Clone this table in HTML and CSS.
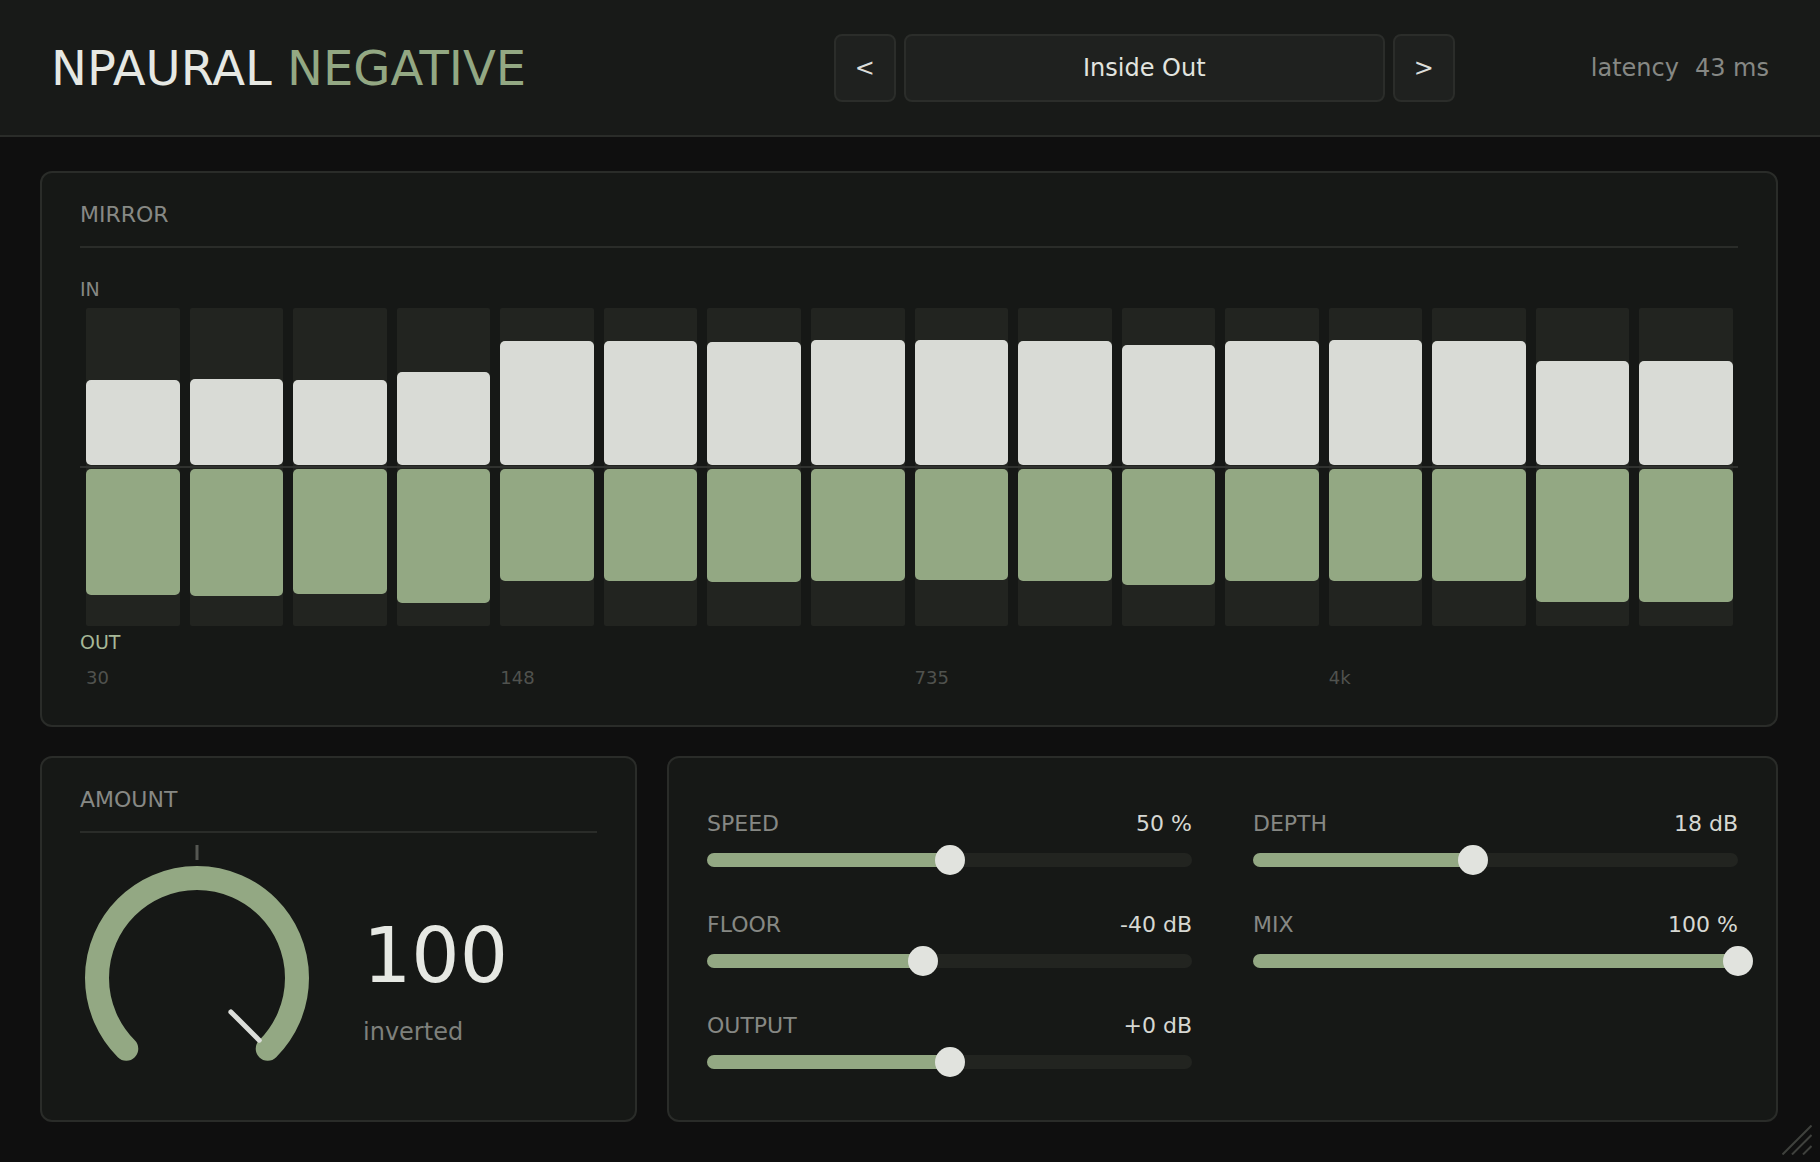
FILE: index.html
```html
<!DOCTYPE html>
<html lang="en">
<head>
<meta charset="utf-8">
<title>NPAURAL NEGATIVE</title>
<link rel="stylesheet" href="styles.css">
</head>
<body>
<div class="app">
  <header class="topbar">
    <div class="brand"><span class="brand-a">NPAURAL</span> <span class="brand-b">NEGATIVE</span></div>
    <nav class="presets">
      <button class="btn btn-arrow">&lt;</button>
      <div class="btn preset-name">Inside Out</div>
      <button class="btn btn-arrow">&gt;</button>
    </nav>
    <div class="latency"><span>latency</span><span class="lat-val">43 ms</span></div>
  </header>

  <main class="main">
    <section class="panel mirror">
      <div class="panel-head">MIRROR</div>
      <div class="axis-label">IN</div>
      <div class="chart">
        <div class="track"><div class="half top"><div class="bar in" style="height:85px"></div></div><div class="half bottom"><div class="bar out" style="height:126px"></div></div></div>
        <div class="track"><div class="half top"><div class="bar in" style="height:86px"></div></div><div class="half bottom"><div class="bar out" style="height:127px"></div></div></div>
        <div class="track"><div class="half top"><div class="bar in" style="height:85px"></div></div><div class="half bottom"><div class="bar out" style="height:125px"></div></div></div>
        <div class="track"><div class="half top"><div class="bar in" style="height:93px"></div></div><div class="half bottom"><div class="bar out" style="height:134px"></div></div></div>
        <div class="track"><div class="half top"><div class="bar in" style="height:124px"></div></div><div class="half bottom"><div class="bar out" style="height:112px"></div></div></div>
        <div class="track"><div class="half top"><div class="bar in" style="height:124px"></div></div><div class="half bottom"><div class="bar out" style="height:112px"></div></div></div>
        <div class="track"><div class="half top"><div class="bar in" style="height:123px"></div></div><div class="half bottom"><div class="bar out" style="height:113px"></div></div></div>
        <div class="track"><div class="half top"><div class="bar in" style="height:125px"></div></div><div class="half bottom"><div class="bar out" style="height:112px"></div></div></div>
        <div class="track"><div class="half top"><div class="bar in" style="height:125px"></div></div><div class="half bottom"><div class="bar out" style="height:111px"></div></div></div>
        <div class="track"><div class="half top"><div class="bar in" style="height:124px"></div></div><div class="half bottom"><div class="bar out" style="height:112px"></div></div></div>
        <div class="track"><div class="half top"><div class="bar in" style="height:120px"></div></div><div class="half bottom"><div class="bar out" style="height:116px"></div></div></div>
        <div class="track"><div class="half top"><div class="bar in" style="height:124px"></div></div><div class="half bottom"><div class="bar out" style="height:112px"></div></div></div>
        <div class="track"><div class="half top"><div class="bar in" style="height:125px"></div></div><div class="half bottom"><div class="bar out" style="height:112px"></div></div></div>
        <div class="track"><div class="half top"><div class="bar in" style="height:124px"></div></div><div class="half bottom"><div class="bar out" style="height:112px"></div></div></div>
        <div class="track"><div class="half top"><div class="bar in" style="height:104px"></div></div><div class="half bottom"><div class="bar out" style="height:133px"></div></div></div>
        <div class="track"><div class="half top"><div class="bar in" style="height:104px"></div></div><div class="half bottom"><div class="bar out" style="height:133px"></div></div></div>
      </div>
      <div class="axis-label out-label">OUT</div>
      <div class="freqs">
        <span>30</span><span>148</span><span>735</span><span>4k</span>
      </div>
    </section>

    <div class="bottom-row">
      <section class="panel amount">
        <div class="panel-head">AMOUNT</div>
        <div class="knob-row">
          <svg class="knob" width="234" height="236" viewBox="0 0 234 236">
            <line x1="117" y1="2" x2="117" y2="17" stroke="#555752" stroke-width="3"/>
            <path d="M 46.29 205.71 A 100 100 0 1 1 187.71 205.71" fill="none" stroke="#93a883" stroke-width="24" stroke-linecap="round"/>
            <line x1="150.9" y1="168.9" x2="179.2" y2="197.2" stroke="#dcdeda" stroke-width="5" stroke-linecap="round"/>
          </svg>
          <div class="knob-value">
            <div class="big">100</div>
            <div class="sub">inverted</div>
          </div>
        </div>
      </section>

      <section class="panel controls">
        <div class="sliders">
          <div class="slider">
            <div class="slider-head"><span class="s-label">SPEED</span><span class="s-val">50 %</span></div>
            <div class="slider-body"><div class="rail"><div class="fill" style="width:50%"></div><div class="thumb" style="left:50%"></div></div></div>
          </div>
          <div class="slider">
            <div class="slider-head"><span class="s-label">DEPTH</span><span class="s-val">18 dB</span></div>
            <div class="slider-body"><div class="rail"><div class="fill" style="width:45.4%"></div><div class="thumb" style="left:45.4%"></div></div></div>
          </div>
          <div class="slider">
            <div class="slider-head"><span class="s-label">FLOOR</span><span class="s-val">-40 dB</span></div>
            <div class="slider-body"><div class="rail"><div class="fill" style="width:44.5%"></div><div class="thumb" style="left:44.5%"></div></div></div>
          </div>
          <div class="slider">
            <div class="slider-head"><span class="s-label">MIX</span><span class="s-val">100 %</span></div>
            <div class="slider-body"><div class="rail"><div class="fill" style="width:100%"></div><div class="thumb" style="left:100%"></div></div></div>
          </div>
          <div class="slider">
            <div class="slider-head"><span class="s-label">OUTPUT</span><span class="s-val">+0 dB</span></div>
            <div class="slider-body"><div class="rail"><div class="fill" style="width:50%"></div><div class="thumb" style="left:50%"></div></div></div>
          </div>
        </div>
      </section>
    </div>
  </main>

  <svg class="grip" width="30" height="30" viewBox="0 0 30 30">
    <line x1="0.5" y1="29.5" x2="29.5" y2="0.5" stroke="#3f413d" stroke-width="2"/>
    <line x1="10" y1="29.5" x2="29.5" y2="10" stroke="#3f413d" stroke-width="2"/>
    <line x1="21" y1="29.5" x2="29.5" y2="21" stroke="#3f413d" stroke-width="2"/>
  </svg>
</div>
</body>
</html>
```

FILE: styles.css
```css
* { box-sizing: border-box; }

html, body {
  margin: 0;
  padding: 0;
  background: #0f0f0f;
  font-family: "DejaVu Sans", "Noto Sans", sans-serif;
  color: #e4e6e1;
}

.app {
  position: relative;
  min-height: 100vh;
  display: flex;
  flex-direction: column;
}

/* ---------- header ---------- */
.topbar {
  height: 137px;
  background: #181a18;
  border-bottom: 2px solid #2a2c29;
  display: flex;
  align-items: center;
  padding: 0 51px 0 51px;
}

.brand {
  font-size: 48px;
  line-height: 1;
  white-space: nowrap;
}
.brand-a { color: #e6e8e3; }
.brand-b { color: #93a883; }

.presets {
  margin-left: auto;
  display: flex;
  gap: 8px;
}

.btn {
  height: 68px;
  background: #1f211f;
  border: 2px solid #2b2d2a;
  border-radius: 8px;
  color: #dcdeda;
  font-family: "DejaVu Sans", sans-serif;
  font-size: 24px;
  display: flex;
  align-items: center;
  justify-content: center;
  padding: 0;
}
.btn-arrow { width: 62px; }
.preset-name { width: 481px; color: #e2e4df; }

.latency {
  margin-left: 136px;
  font-size: 24px;
  color: #868884;
  white-space: nowrap;
}
.lat-val { margin-left: 16px; }

/* ---------- main ---------- */
.main {
  flex: 1;
  padding: 34px 42px 40px 40px;
  display: flex;
  flex-direction: column;
  gap: 29px;
}

.panel {
  background: #161816;
  border: 2px solid #2a2c29;
  border-radius: 12px;
}

.panel-head {
  font-size: 22px;
  line-height: 26px;
  color: #878985;
  padding-top: 1px;
  padding-bottom: 18px;
  border-bottom: 2px solid #2a2c29;
}

.mirror {
  padding: 28px 38px 36px;
}
.mirror .panel-head { margin-bottom: 30px; }

.axis-label {
  font-size: 19px;
  line-height: 22px;
  color: #868884;
  margin-bottom: 8px;
}
.out-label {
  color: #a7b898;
  margin: 5px 0 14px;
}

.chart {
  position: relative;
  display: grid;
  grid-template-columns: repeat(16, 1fr);
  column-gap: 10px;
  padding: 0 5px 0 6px;
}
.chart::before {
  content: "";
  position: absolute;
  left: 0;
  right: 0;
  top: 158px;
  height: 2px;
  background: #30322f;
}

.track {
  height: 318px;
  background: #222420;
  border-radius: 2px;
  display: flex;
  flex-direction: column;
  gap: 4px;
}
.half { flex: 1; display: flex; }
.half.top { align-items: flex-end; }
.half.bottom { align-items: flex-start; }
.bar { width: 100%; border-radius: 5px; position: relative; }
.bar.in { background: #d9dbd6; }
.bar.out { background: #93a883; }

.freqs {
  display: grid;
  grid-template-columns: repeat(4, 1fr);
  column-gap: 10px;
  padding: 0 5px 0 6px;
  font-size: 18px;
  line-height: 22px;
  color: #50524e;
}

/* ---------- bottom row ---------- */
.bottom-row {
  flex: 1;
  display: grid;
  grid-template-columns: 597px 1fr;
  gap: 30px;
}

.amount {
  padding: 28px 38px 30px;
}

.knob-row {
  display: flex;
  align-items: flex-start;
  margin-top: 10px;
}
.knob { display: block; flex: none; }

.knob-value {
  margin-left: 49px;
  margin-top: 75px;
}
.big {
  font-size: 76px;
  line-height: 76px;
  color: #e6e8e3;
}
.sub {
  margin-top: 24px;
  font-size: 24px;
  line-height: 29px;
  color: #7e807c;
}

.controls {
  padding: 53px 38px 39px 38px;
}

.sliders {
  display: grid;
  grid-template-columns: 1fr 1fr;
  column-gap: 61px;
  row-gap: 37px;
}

.slider-head {
  display: flex;
  justify-content: space-between;
  font-size: 22px;
  line-height: 26px;
  margin-bottom: 8px;
}
.s-label { color: #868884; }
.s-val { color: #d6d8d3; }

.slider-body {
  height: 30px;
  padding-top: 8px;
}
.rail {
  position: relative;
  height: 14px;
  background: #222420;
  border-radius: 7px;
}
.fill {
  height: 100%;
  background: #93a883;
  border-radius: 7px;
}
.thumb {
  position: absolute;
  top: 50%;
  width: 30px;
  height: 30px;
  border-radius: 50%;
  background: #e1e3de;
  transform: translate(-50%, -50%);
}

.grip {
  position: absolute;
  right: 8px;
  bottom: 7px;
}
```
